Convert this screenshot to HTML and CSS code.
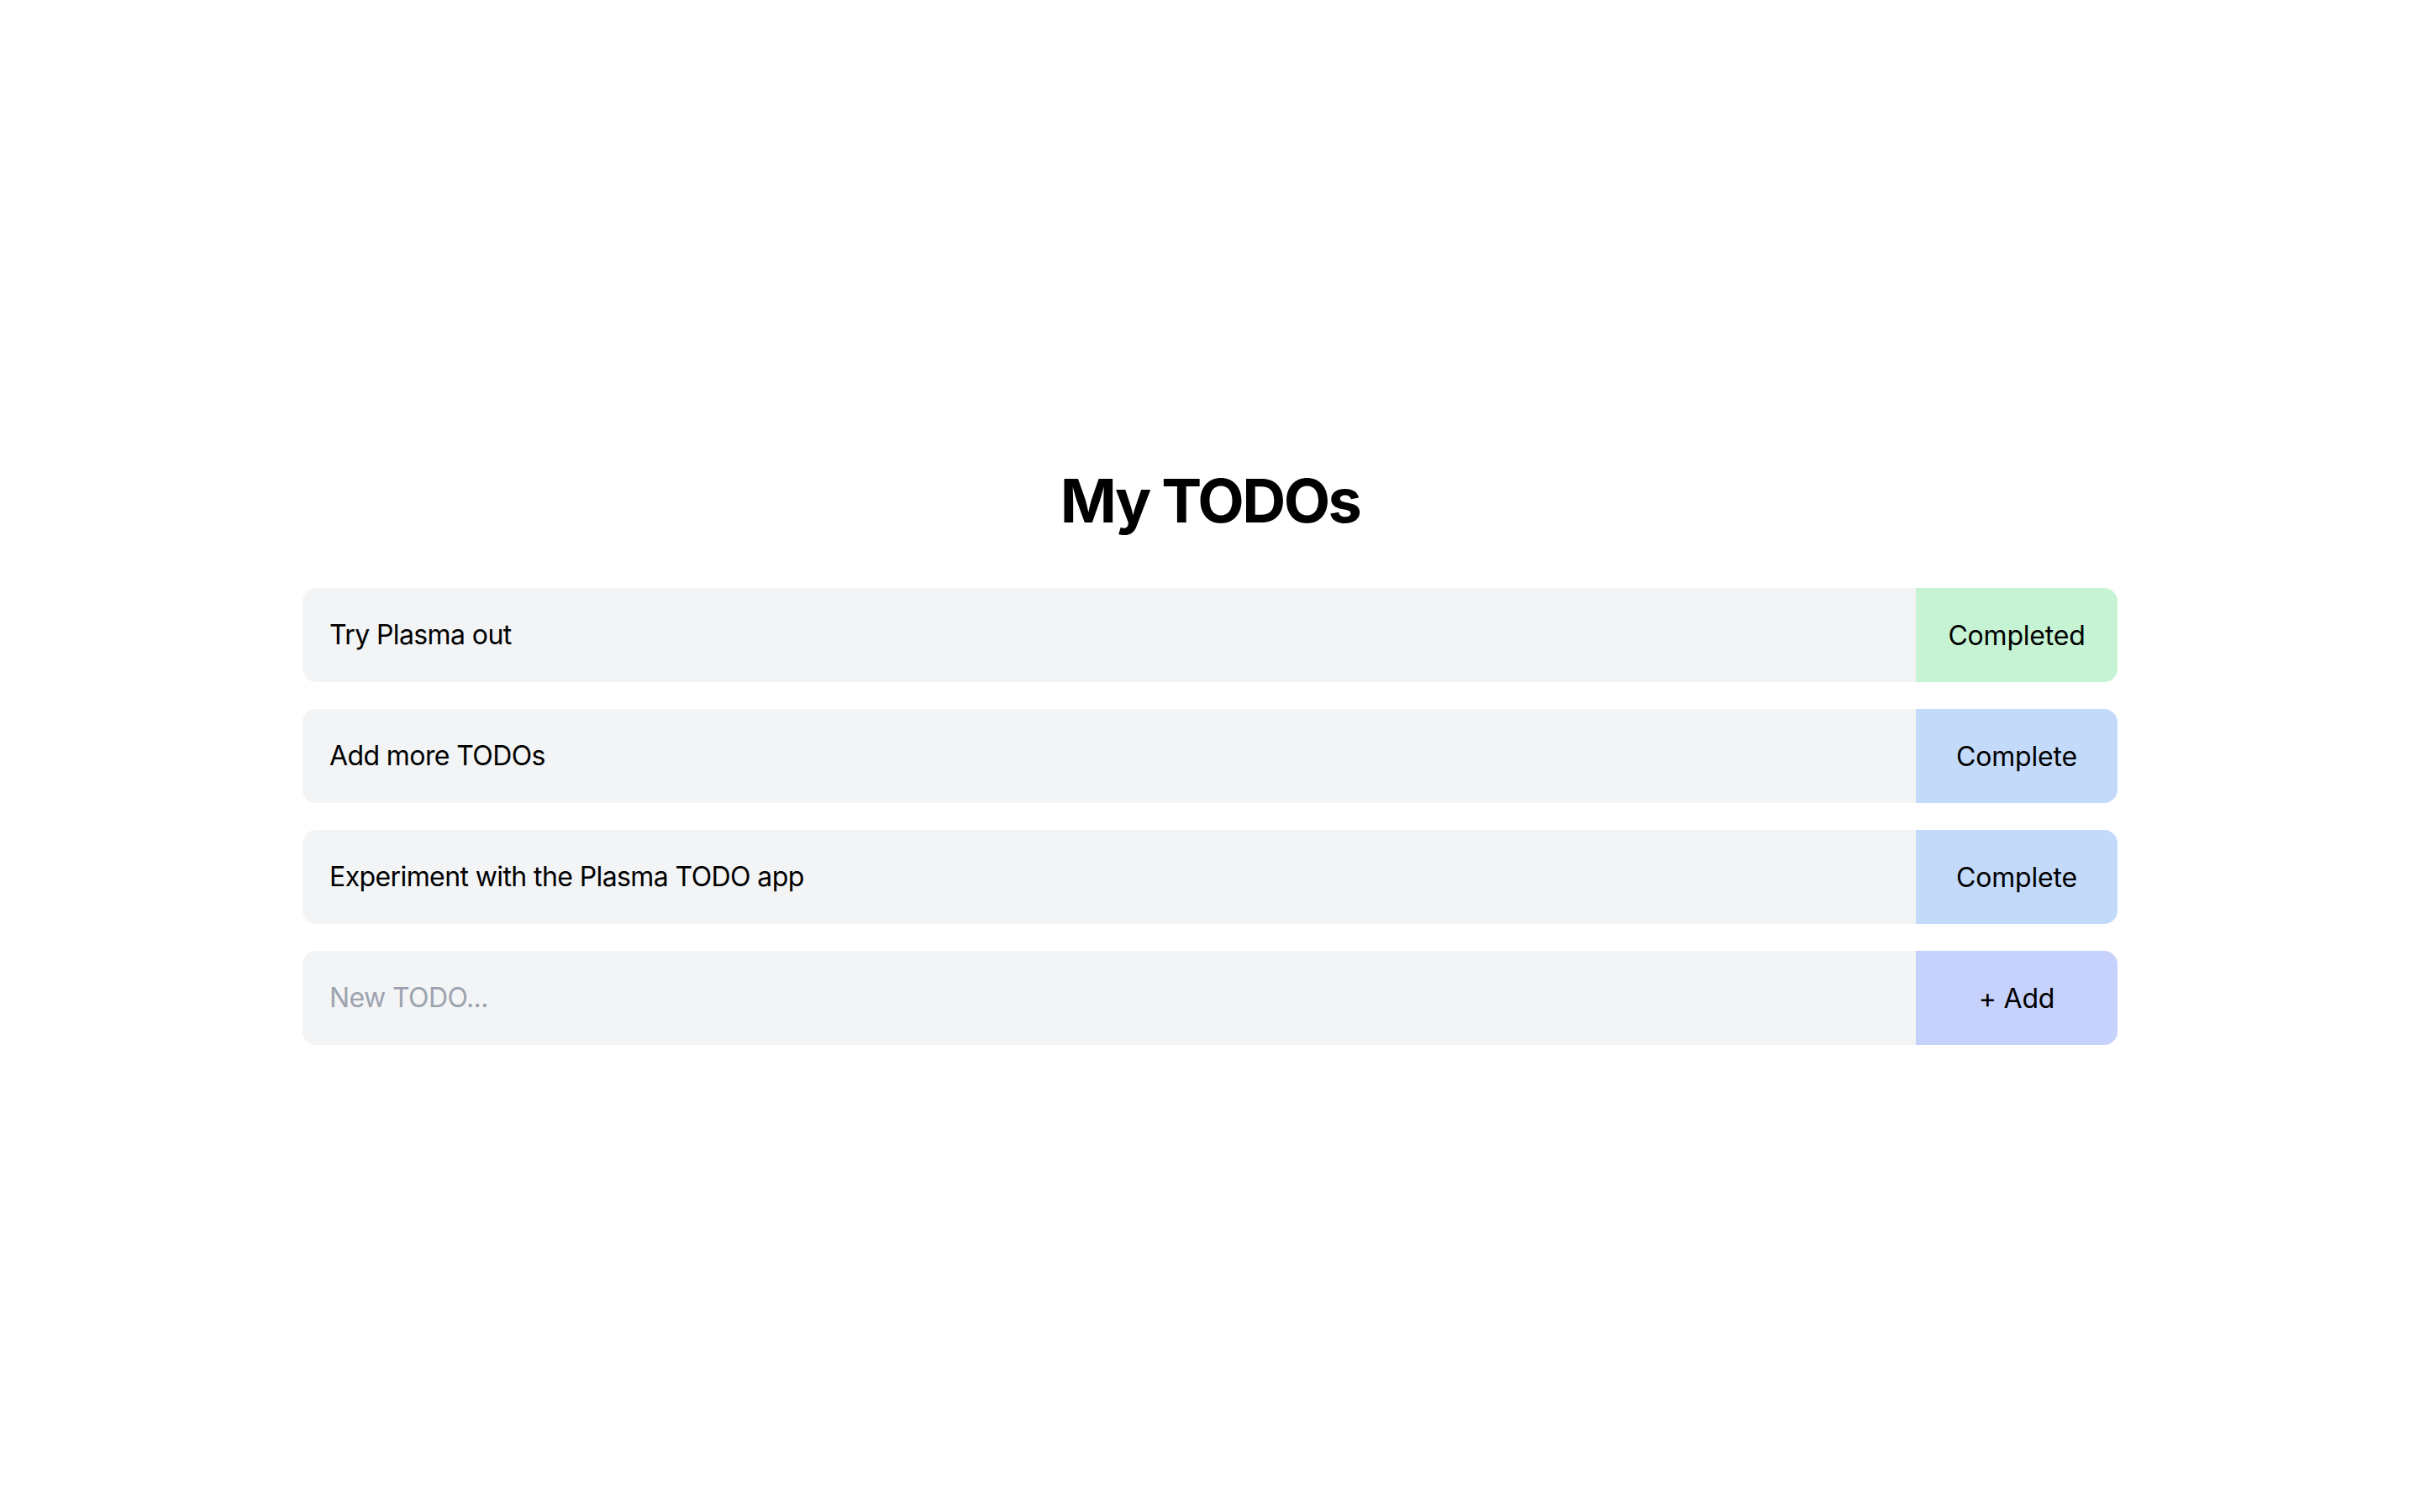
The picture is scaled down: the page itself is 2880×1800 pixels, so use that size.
FILE: index.html
```html
<!DOCTYPE html>
<html lang="en">
<head>
<meta charset="utf-8">
<title>My TODOs</title>
<link rel="stylesheet" href="styles.css">
</head>
<body>
<main class="page">
  <section class="todo-app">
    <h1 class="title">My TODOs</h1>
    <ul class="todo-list">
      <li class="todo-row">
        <span class="todo-text">Try Plasma out</span>
        <button class="todo-btn btn-done">Completed</button>
      </li>
      <li class="todo-row">
        <span class="todo-text">Add more TODOs</span>
        <button class="todo-btn btn-complete">Complete</button>
      </li>
      <li class="todo-row">
        <span class="todo-text">Experiment with the Plasma TODO app</span>
        <button class="todo-btn btn-complete">Complete</button>
      </li>
      <li class="todo-row">
        <input class="todo-input" type="text" placeholder="New TODO...">
        <button class="todo-btn btn-add">+ Add</button>
      </li>
    </ul>
  </section>
</main>
</body>
</html>
```
FILE: styles.css
```css
* { box-sizing: border-box; }
html, body {
  margin: 0;
  padding: 0;
  background: #ffffff;
  font-family: Inter, "Noto Sans", sans-serif;
  color: #000;
}
.page {
  min-height: 100vh;
  display: flex;
  align-items: center;
  justify-content: center;
}
.todo-app {
  width: 2160px;
  display: flex;
  flex-direction: column;
}
.title {
  margin: 0 0 64px 0;
  text-align: center;
  font-size: 72px;
  line-height: 80px;
  font-weight: 700;
  letter-spacing: -2.6px;
}
.todo-list {
  list-style: none;
  margin: 0;
  padding: 0;
  display: flex;
  flex-direction: column;
  gap: 32px;
}
.todo-row {
  display: flex;
  height: 112px;
  background: #f3f4f6;
  border-radius: 16px;
  overflow: hidden;
}
.todo-text, .todo-input {
  flex: 1;
  display: flex;
  align-items: center;
  padding: 0 32px;
  font-size: 32px;
  line-height: 48px;
  font-family: inherit;
  color: #000;
  letter-spacing: -0.6px;
}
.todo-input {
  border: none;
  background: transparent;
  outline: none;
}
.todo-input::placeholder { color: #9ca3af; }
.todo-btn {
  width: 240px;
  border: none;
  font-family: inherit;
  font-size: 32px;
  color: #000;
  cursor: pointer;
  padding: 0;
  letter-spacing: -0.2px;
}
.btn-done { background: #c6f3d4; }
.btn-complete { background: #c4dafa; }
.btn-add { background: #c7d2fc; }
```
